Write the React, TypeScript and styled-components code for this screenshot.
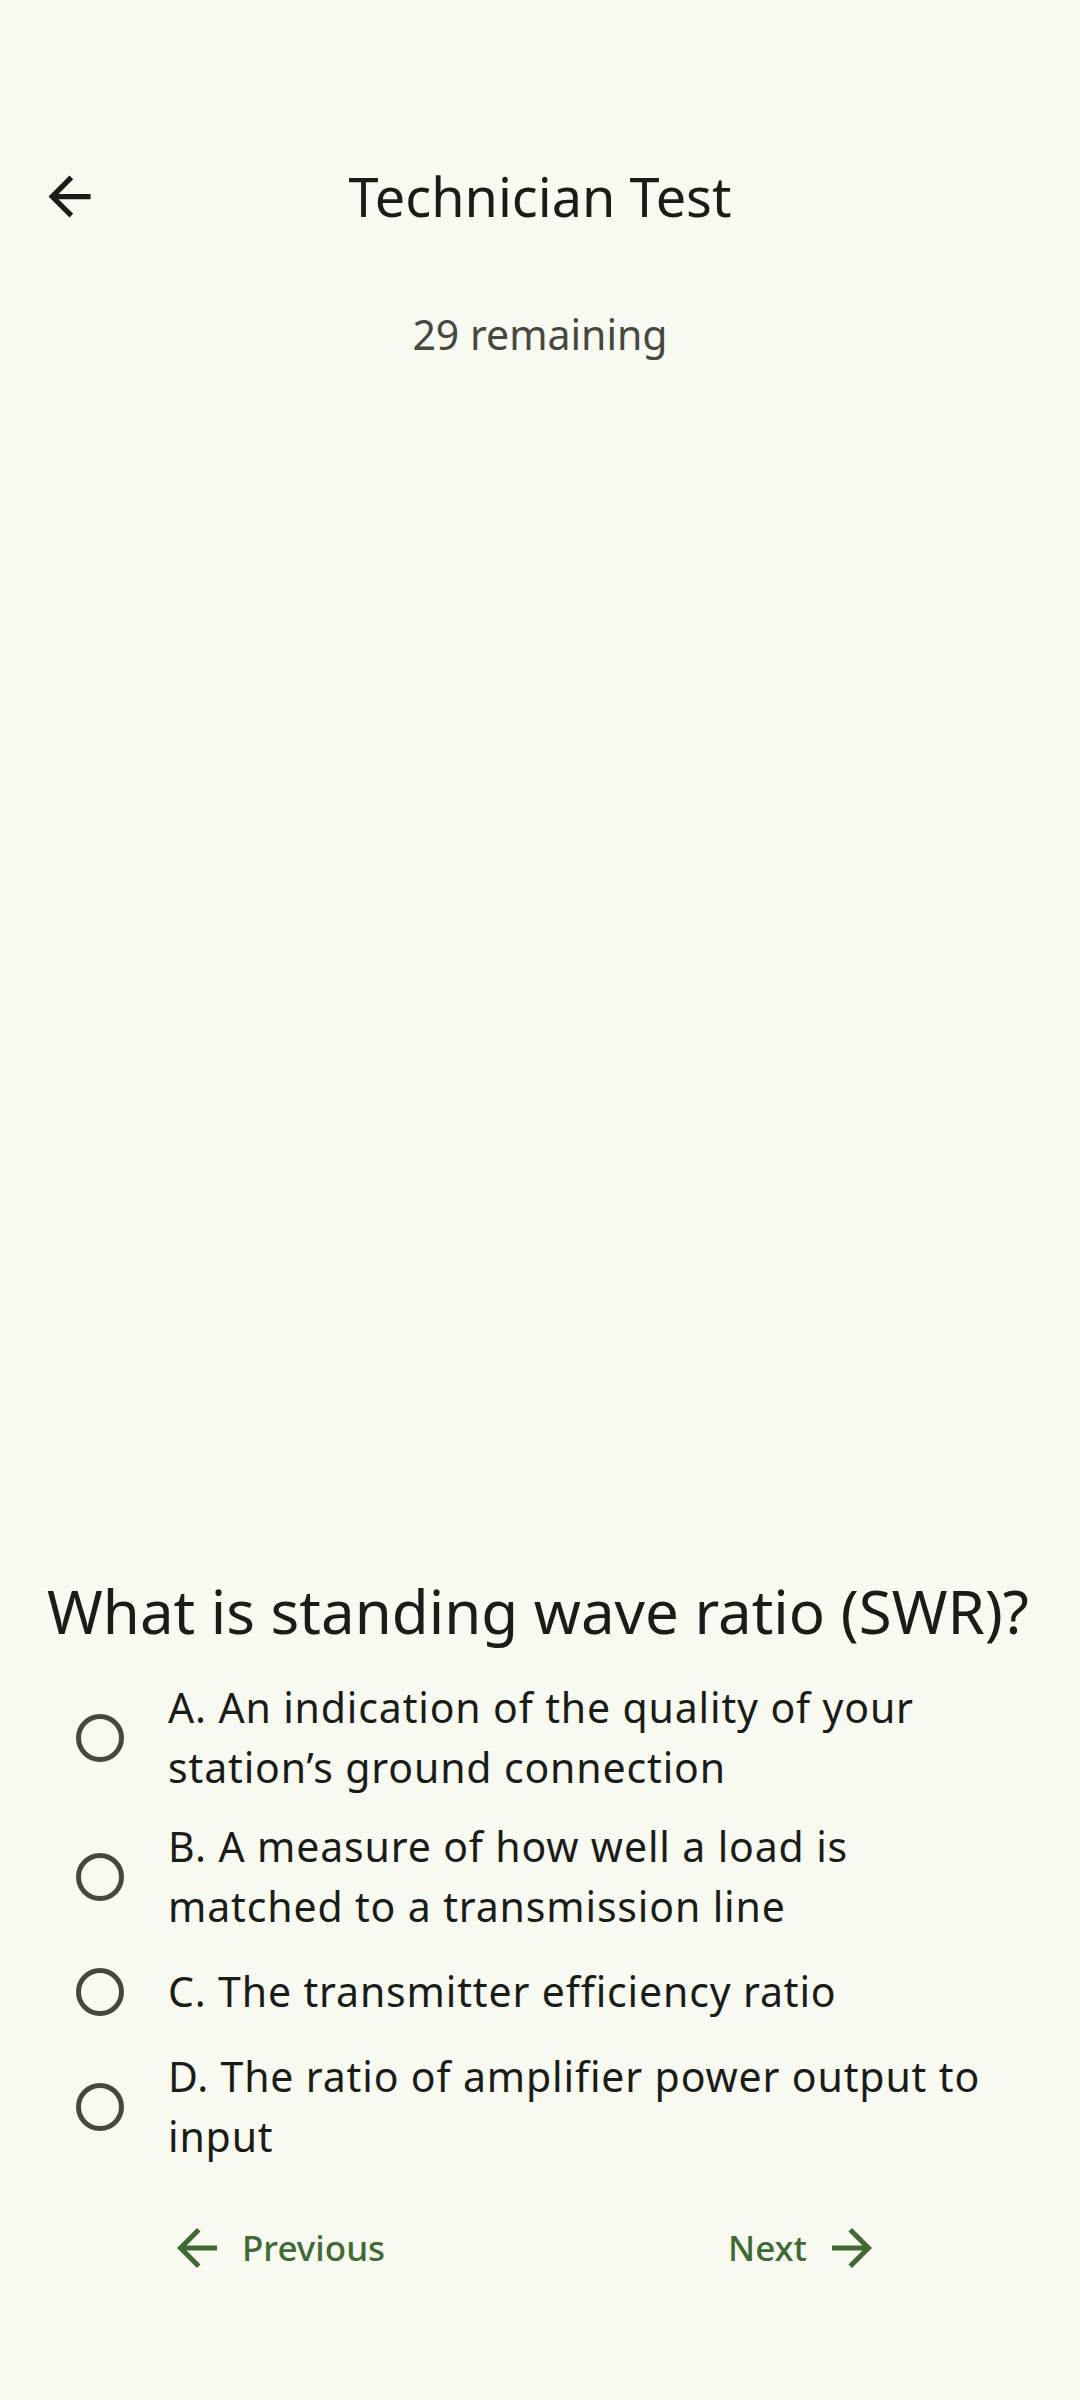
import styled, { createGlobalStyle } from "styled-components";

const GlobalStyle = createGlobalStyle`
  html, body {
    margin: 0;
    padding: 0;
    background: #f8f9f1;
  }
  body {
    font-family: "Noto Sans", "Open Sans", sans-serif;
    color: #1a1c18;
  }
`;

const Page = styled.div`
  min-height: 100vh;
  display: flex;
  flex-direction: column;
  background: #f8f9f1;
`;

const TopBar = styled.header`
  margin-top: 112px;
  height: 168px;
  display: flex;
  align-items: center;
  position: relative;
`;

const IconButton = styled.button`
  border: none;
  background: none;
  padding: 0;
  margin-left: 38px;
  width: 63px;
  height: 63px;
  display: flex;
  align-items: center;
  justify-content: center;
  color: #1a1c18;
`;

const Title = styled.h1`
  position: absolute;
  left: 0;
  right: 0;
  margin: 0;
  text-align: center;
  font-size: 54px;
  font-weight: 400;
  line-height: 74px;
  pointer-events: none;
`;

const Remaining = styled.div`
  margin-top: 26px;
  text-align: center;
  font-size: 41px;
  line-height: 56px;
  color: #45483f;
`;

const QuestionBlock = styled.section`
  margin-top: auto;
  display: flex;
  flex-direction: column;
`;

const Question = styled.h2`
  margin: 0 0 15px;
  padding: 0 47px;
  font-size: 60px;
  font-weight: 400;
  line-height: 84px;
  white-space: nowrap;
`;

const OptionRow = styled.label`
  display: flex;
  align-items: center;
  gap: 44px;
  padding: 10px 80px 10px 76px;
  min-height: 91px;
  box-sizing: border-box;
`;

const Radio = styled.span`
  flex: none;
  width: 48px;
  height: 48px;
  border-radius: 50%;
  border: 5px solid #44483e;
  box-sizing: border-box;
`;

const OptionText = styled.span`
  font-size: 41px;
  line-height: 59.5px;
  letter-spacing: 0.85px;
  color: #1a1c18;
`;

const NavRow = styled.nav`
  margin: 19px 0 100px;
  height: 105px;
  display: flex;
  align-items: center;
  justify-content: space-between;
  padding: 0 182px 0 151px;
`;

const NavButton = styled.button`
  border: none;
  background: none;
  display: flex;
  align-items: center;
  gap: 15px;
  padding: 0 16px;
  height: 105px;
  color: #3f6a33;
  font-family: "Noto Sans", "Open Sans", sans-serif;
  font-size: 35px;
  font-weight: 500;
`;

const Arrow = ({ dir, size }: { dir: "left" | "right"; size: number }) => (
  <svg
    width={size}
    height={size}
    viewBox="0 0 24 24"
    fill="currentColor"
    style={{ transform: dir === "right" ? "scaleX(-1)" : undefined }}
  >
    <path d="M20 11H7.83l5.59-5.59L12 4l-8 8 8 8 1.41-1.41L7.83 13H20v-2z" />
  </svg>
);

const options = [
  "A. An indication of the quality of your station’s ground connection",
  "B. A measure of how well a load is matched to a transmission line",
  "C. The transmitter efficiency ratio",
  "D. The ratio of amplifier power output to input",
];

export default function App() {
  return (
    <>
      <GlobalStyle />
      <Page>
        <TopBar>
          <IconButton aria-label="back">
            <Arrow dir="left" size={63} />
          </IconButton>
          <Title>Technician Test</Title>
        </TopBar>
        <Remaining>29 remaining</Remaining>
        <QuestionBlock>
          <Question>What is standing wave ratio (SWR)?</Question>
          {options.map((o) => (
            <OptionRow key={o}>
              <Radio />
              <OptionText>{o}</OptionText>
            </OptionRow>
          ))}
        </QuestionBlock>
        <NavRow>
          <NavButton>
            <Arrow dir="left" size={60} />
            Previous
          </NavButton>
          <NavButton>
            Next
            <Arrow dir="right" size={60} />
          </NavButton>
        </NavRow>
      </Page>
    </>
  );
}
